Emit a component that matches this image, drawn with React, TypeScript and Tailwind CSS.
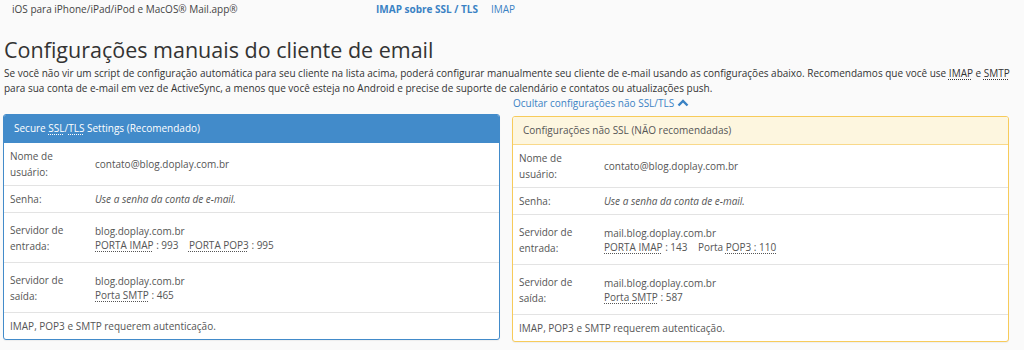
import React from 'react';

const font = { fontFamily: '"Open Sans", "Liberation Sans", sans-serif' };

function Abbr({ children }: { children: React.ReactNode }) {
  return (
    <span className="underline decoration-dotted decoration-1 underline-offset-2">{children}</span>
  );
}

type Row = { label: React.ReactNode; value: React.ReactNode; h: string };

function Panel({ title, rows, variant }: { title: React.ReactNode; rows: Row[]; variant: 'blue' | 'yellow' }) {
  const blue = variant === 'blue';
  return (
    <div
      className={
        'rounded-[3px] border bg-white overflow-hidden shadow-[0_1px_1px_rgba(0,0,0,0.05)] ' +
        (blue ? 'border-[#428bca]' : 'border-[#f7cb5a]')
      }
    >
      <div
        className={
          'h-[28px] flex items-center px-[10px] text-[10px] border-b ' +
          (blue ? 'bg-[#428bca] text-white border-[#428bca]' : 'bg-[#fdf6df] text-[#555] border-[#f9d98a]')
        }
      >
        {title}
      </div>
      {rows.map((r, i) => (
        <div
          key={i}
          className={'flex items-center text-[10px] text-[#555] ' + r.h + (i < rows.length - 1 ? ' border-b border-[#e3e3e3]' : '')}
        >
          {r.value === null ? (
            <div className="pl-[6px] leading-[16px]">{r.label}</div>
          ) : (
            <>
              <div className="w-[91px] shrink-0 pl-[6px] leading-[16px]">{r.label}</div>
              <div className="leading-[14px]">{r.value}</div>
            </>
          )}
        </div>
      ))}
    </div>
  );
}

export default function App() {
  const leftRows: Row[] = [
    { label: <>Nome de<br />usuário:</>, value: 'contato@blog.doplay.com.br', h: 'h-[43px]' },
    { label: 'Senha:', value: <i>Use a senha da conta de e-mail.</i>, h: 'h-[27px]' },
    {
      label: <>Servidor de<br />entrada:</>,
      value: (
        <>
          <div>blog.doplay.com.br</div>
          <div>
            <Abbr>PORTA IMAP</Abbr> : 993 &nbsp;&nbsp; <Abbr>PORTA POP3</Abbr> : 995
          </div>
        </>
      ),
      h: 'h-[50px]',
    },
    {
      label: <>Servidor de<br />saída:</>,
      value: (
        <>
          <div>blog.doplay.com.br</div>
          <div>
            <Abbr>Porta SMTP</Abbr> : 465
          </div>
        </>
      ),
      h: 'h-[50px]',
    },
    { label: 'IMAP, POP3 e SMTP requerem autenticação.', value: null, h: 'h-[26px]' },
  ];

  const rightRows: Row[] = [
    { label: <>Nome de<br />usuário:</>, value: 'contato@blog.doplay.com.br', h: 'h-[43px]' },
    { label: 'Senha:', value: <i>Use a senha da conta de e-mail.</i>, h: 'h-[27px]' },
    {
      label: <>Servidor de<br />entrada:</>,
      value: (
        <>
          <div>mail.blog.doplay.com.br</div>
          <div>
            <Abbr>PORTA IMAP</Abbr> : 143 &nbsp;&nbsp; Porta <Abbr>POP3 : 110</Abbr>
          </div>
        </>
      ),
      h: 'h-[50px]',
    },
    {
      label: <>Servidor de<br />saída:</>,
      value: (
        <>
          <div>mail.blog.doplay.com.br</div>
          <div>
            <Abbr>Porta SMTP</Abbr> : 587
          </div>
        </>
      ),
      h: 'h-[50px]',
    },
    { label: 'IMAP, POP3 e SMTP requerem autenticação.', value: null, h: 'h-[26px]' },
  ];

  return (
    <div className="w-[1024px] h-[350px] bg-[#fafafa] text-[#333] overflow-hidden" style={font}>
      <div className="flex items-center h-[18px] text-[10px]">
        <div className="w-[376px] pl-[12px] text-[#444]">iOS para iPhone/iPad/iPod e MacOS® Mail.app®</div>
        <div className="font-bold text-[#3a82c4]">IMAP sobre SSL / TLS</div>
        <div className="ml-[13px] text-[#3a82c4]">IMAP</div>
      </div>
      <h1 className="mt-[16px] pl-[4px] text-[21.5px] leading-[32px] text-[#333]">
        Configurações manuais do cliente de email
      </h1>
      <p className="pl-[4px] pr-[14px] text-[10px] leading-[15px] text-[#333]">
        Se você não vir um script de configuração automática para seu cliente na lista acima, poderá configurar
        manualmente seu cliente de e-mail usando as configurações abaixo. Recomendamos que você use <Abbr>IMAP</Abbr> e{' '}
        <Abbr>SMTP</Abbr> para sua conta de e-mail em vez de ActiveSync, a menos que você esteja no Android e precise de
        suporte de calendário e contatos ou atualizações push.
      </p>
      <div className="flex items-start pl-[3px] gap-[12px]">
        <div className="w-[497px] mt-[18px]">
          <Panel
            variant="blue"
            title={
              <span>
                Secure <Abbr>SSL</Abbr>/<Abbr>TLS</Abbr> Settings (Recomendado)
              </span>
            }
            rows={leftRows}
          />
        </div>
        <div className="w-[497px]">
          <div className="h-[20px] flex items-start pl-[1px] text-[10px] leading-[14px] text-[#3a82c4]">
            Ocultar configurações não SSL/TLS
            <svg width="12" height="10" viewBox="0 0 12 10" className="ml-[3px] mt-[2px]">
              <path d="M1.5 7.5 L6 3 L10.5 7.5" fill="none" stroke="#3a82c4" strokeWidth="2.4" />
            </svg>
          </div>
          <Panel variant="yellow" title="Configurações não SSL (NÃO recomendadas)" rows={rightRows} />
        </div>
      </div>
    </div>
  );
}
